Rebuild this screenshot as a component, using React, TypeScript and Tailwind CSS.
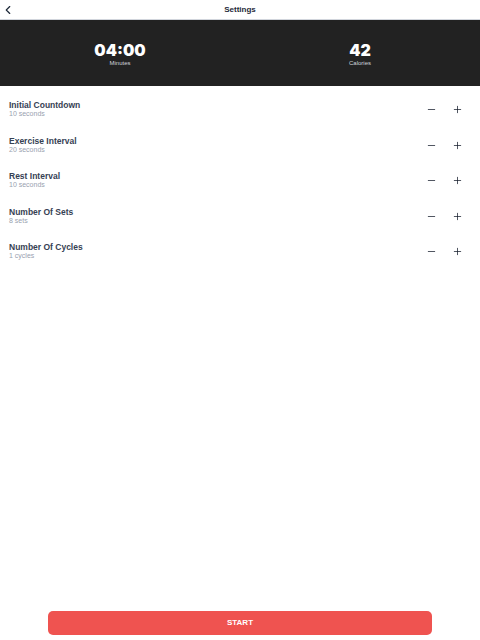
import { ChevronLeft, Minus, Plus } from 'lucide-react';

const settings = [
  { title: 'Initial Countdown', value: '10 seconds' },
  { title: 'Exercise Interval', value: '20 seconds' },
  { title: 'Rest Interval', value: '10 seconds' },
  { title: 'Number Of Sets', value: '8 sets' },
  { title: 'Number Of Cycles', value: '1 cycles' },
];

function Stat({ value, label }: { value: string; label: string }) {
  return (
    <div className="flex flex-1 flex-col items-center">
      <span className="text-[16px] leading-[18px] font-black text-white" style={{ fontFamily: 'Inter, sans-serif' }}>
        {value}
      </span>
      <span className="text-[6px] leading-[8px] text-gray-300">{label}</span>
    </div>
  );
}

export default function App() {
  return (
    <div className="flex h-[640px] w-[480px] flex-col bg-white" style={{ fontFamily: '"Liberation Sans", Arial, sans-serif' }}>
      <header className="relative flex h-[20px] items-center justify-center border-b border-gray-300">
        <button className="absolute left-[1px] top-[3px] text-gray-800">
          <ChevronLeft size={14} strokeWidth={2} />
        </button>
        <span className="text-[8px] font-bold text-gray-800">Settings</span>
      </header>

      <section className="flex h-[66px] items-center bg-[#222222] pt-[2px]">
        <Stat value="04:00" label="Minutes" />
        <Stat value="42" label="Calories" />
      </section>

      <ul className="flex flex-col pt-[14px]">
        {settings.map((s) => (
          <li key={s.title} className="flex h-[35.6px] items-start pl-[9px] pr-[17px]">
            <div className="flex flex-1 flex-col">
              <span className="text-[8.5px] leading-[10px] font-bold text-gray-700">{s.title}</span>
              <span className="text-[7px] leading-[8px] text-gray-400">{s.value}</span>
            </div>
            <div className="mt-[4px] flex items-center gap-[15px] text-gray-900">
              <Minus size={11} strokeWidth={1.6} />
              <Plus size={11} strokeWidth={1.6} />
            </div>
          </li>
        ))}
      </ul>

      <div className="mt-auto flex justify-center pb-[5px]">
        <button className="h-[24px] w-[384px] rounded-[5px] bg-[#ef5350] text-[8px] font-bold text-white">
          START
        </button>
      </div>
    </div>
  );
}
